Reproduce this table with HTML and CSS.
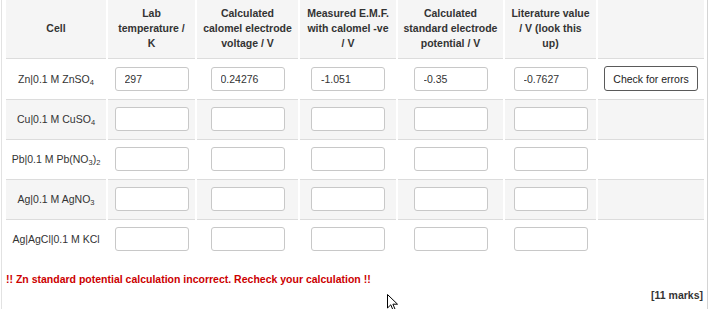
FILE: index.html
```html
<!DOCTYPE html>
<html>
<head>
<meta charset="utf-8">
<link rel="stylesheet" href="styles.css">
</head>
<body>
<div class="frame">
  <table class="cells">
    <thead>
      <tr>
        <th class="c1">Cell</th>
        <th class="c2">Lab<br>temperature /<br>K</th>
        <th class="c3">Calculated<br>calomel electrode<br>voltage / V</th>
        <th class="c4">Measured E.M.F.<br>with calomel -ve<br>/ V</th>
        <th class="c5">Calculated<br>standard electrode<br>potential / V</th>
        <th class="c6">Literature value<br>/ V (look this<br>up)</th>
        <th class="c7"></th>
      </tr>
    </thead>
    <tbody>
      <tr>
        <td class="label">Zn|0.1 M ZnSO<sub>4</sub></td>
        <td><input class="field" value="297"></td>
        <td><input class="field" value="0.24276"></td>
        <td><input class="field" value="-1.051"></td>
        <td><input class="field" value="-0.35"></td>
        <td><input class="field" value="-0.7627"></td>
        <td><button class="check">Check for errors</button></td>
      </tr>
      <tr class="alt">
        <td class="label">Cu|0.1 M CuSO<sub>4</sub></td>
        <td><input class="field"></td>
        <td><input class="field"></td>
        <td><input class="field"></td>
        <td><input class="field"></td>
        <td><input class="field"></td>
        <td></td>
      </tr>
      <tr>
        <td class="label">Pb|0.1 M Pb(NO<sub>3</sub>)<sub>2</sub></td>
        <td><input class="field"></td>
        <td><input class="field"></td>
        <td><input class="field"></td>
        <td><input class="field"></td>
        <td><input class="field"></td>
        <td></td>
      </tr>
      <tr class="alt">
        <td class="label">Ag|0.1 M AgNO<sub>3</sub></td>
        <td><input class="field"></td>
        <td><input class="field"></td>
        <td><input class="field"></td>
        <td><input class="field"></td>
        <td><input class="field"></td>
        <td></td>
      </tr>
      <tr>
        <td class="label">Ag|AgCl|0.1 M KCl</td>
        <td><input class="field"></td>
        <td><input class="field"></td>
        <td><input class="field"></td>
        <td><input class="field"></td>
        <td><input class="field"></td>
        <td></td>
      </tr>
    </tbody>
  </table>
  <p class="error">!! Zn standard potential calculation incorrect. Recheck your calculation !!</p>
  <p class="marks">[11 marks]</p>
  <svg class="cursor" width="12" height="18" viewBox="0 0 12 18"><path d="M0.5 0.5 L0.5 14 L3.8 10.8 L6.2 16.5 L8.2 15.6 L5.9 10.2 L10.5 10.2 Z" fill="#fff" stroke="#000" stroke-width="1"/></svg>
</div>
</body>
</html>
```

FILE: styles.css
```css
html, body {
  margin: 0;
  padding: 0;
  background: #fff;
}
body {
  font-family: "Liberation Sans", Arial, sans-serif;
  font-size: 10.5px;
  color: #333;
}
.frame {
  position: relative;
  margin-left: 1px;
  width: 707px;
  height: 309px;
  border-left: 1px solid #e2e2e2;
  border-right: 1px solid #d4d4d4;
  padding-left: 2px;
  box-sizing: border-box;
}
.cells {
  border-collapse: separate;
  border-spacing: 2px 0;
  table-layout: fixed;
  width: 702px;
}
.cells th {
  background: #f5f5f5;
  font-weight: bold;
  line-height: 15px;
  padding: 6px 2px 7px;
  text-align: center;
  vertical-align: middle;
  white-space: nowrap;
}
.c1 { width: 100px; }
.c2 { width: 87px; }
.c3 { width: 101px; }
.c4 { width: 96px; }
.c5 { width: 105px; }
.c6 { width: 91px; }
.c7 { width: 106px; }
.cells th, .cells td {
  box-sizing: border-box;
}
.cells td {
  border-top: 1px solid #dcdcdc;
  padding: 7px 0 8px;
  text-align: center;
  vertical-align: middle;
  height: 40px;
}
.cells tr.alt td {
  background: #f5f5f5;
}
.label {
  white-space: nowrap;
  line-height: 14px;
}
.label sub {
  font-size: 7.5px;
  vertical-align: -2px;
  line-height: 0;
}
.field {
  display: block;
  margin: 0 auto;
  box-sizing: border-box;
  width: 74px;
  height: 24px;
  border: 1px solid #c8c8c8;
  border-radius: 3px;
  background: #fff;
  padding: 0 9px;
  font-family: "Liberation Sans", Arial, sans-serif;
  font-size: 10.5px;
  color: #333;
  outline: none;
}
.check {
  display: block;
  margin: 0 auto;
  box-sizing: border-box;
  width: 94px;
  height: 25px;
  border: 1px solid #5a5a5a;
  border-radius: 3px;
  background: #fff;
  padding: 0;
  font-family: "Liberation Sans", Arial, sans-serif;
  font-size: 10.5px;
  color: #222;
}
.error {
  margin: 14px 0 0 2px;
  color: #cc0000;
  font-weight: bold;
  line-height: 13px;
}
.marks {
  margin: 3px 4px 0 0;
  text-align: right;
  font-weight: bold;
  line-height: 13px;
  color: #333;
}
.cursor {
  position: absolute;
  left: 385px;
  top: 294px;
}
```
